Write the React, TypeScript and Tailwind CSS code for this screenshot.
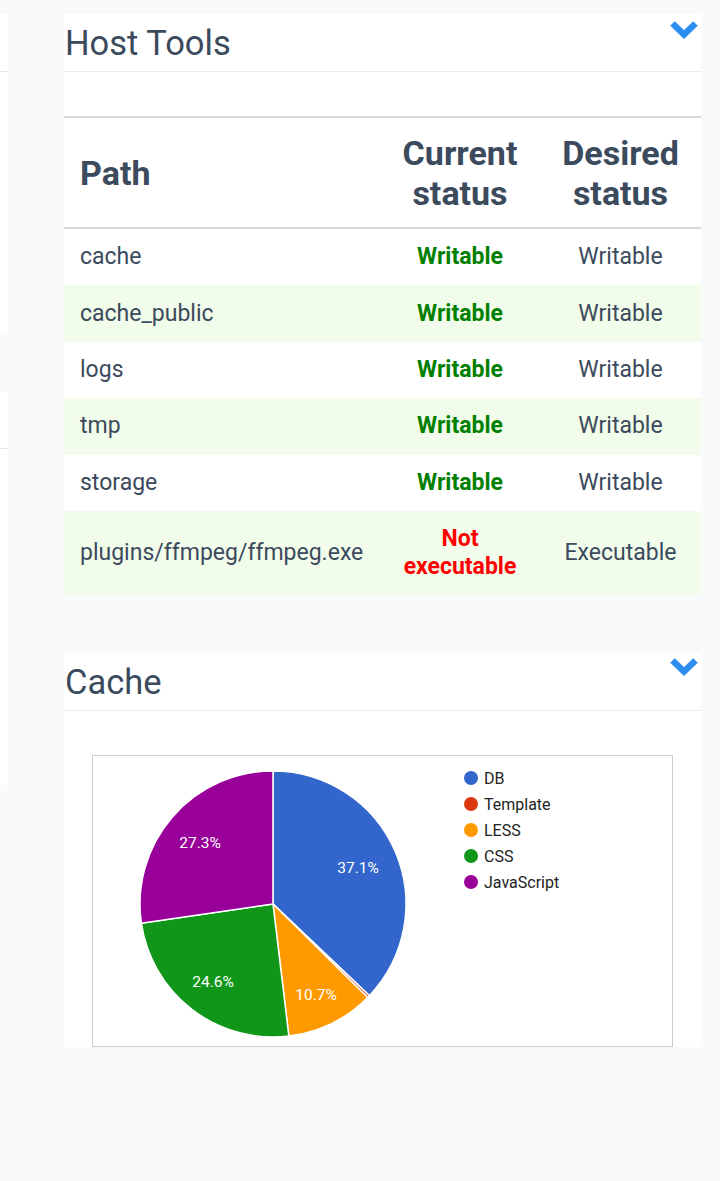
import React from "react";

type Row = { path: string; current: string; ok: boolean; desired: string };

const rows: Row[] = [
  { path: "cache", current: "Writable", ok: true, desired: "Writable" },
  { path: "cache_public", current: "Writable", ok: true, desired: "Writable" },
  { path: "logs", current: "Writable", ok: true, desired: "Writable" },
  { path: "tmp", current: "Writable", ok: true, desired: "Writable" },
  { path: "storage", current: "Writable", ok: true, desired: "Writable" },
  { path: "plugins/ffmpeg/ffmpeg.exe", current: "Not executable", ok: false, desired: "Executable" },
];

const slices = [
  { name: "DB", value: 37.1, color: "#3366cc" },
  { name: "Template", value: 0.3, color: "#dc3912" },
  { name: "LESS", value: 10.7, color: "#ff9900" },
  { name: "CSS", value: 24.6, color: "#109618" },
  { name: "JavaScript", value: 27.3, color: "#990099" },
];

const labels = [
  { text: "37.1%", dx: 85, dy: -37 },
  { text: "10.7%", dx: 43, dy: 90 },
  { text: "24.6%", dx: -60, dy: 77 },
  { text: "27.3%", dx: -73, dy: -62 },
];

function Chevron() {
  return (
    <svg width="30" height="20" viewBox="0 0 30 20">
      <polyline points="3.5,3.5 15,14.5 26.5,3.5" fill="none" stroke="#2b8ef0" strokeWidth="6.5" strokeLinecap="butt" strokeLinejoin="miter" />
    </svg>
  );
}

function PieChart() {
  const cx = 180;
  const cy = 148;
  const r = 133;
  const total = slices.reduce((s, x) => s + x.value, 0);
  let start = -Math.PI / 2;
  const paths = slices.map((s) => {
    const sweep = (s.value / total) * Math.PI * 2;
    const end = start + sweep;
    const x1 = cx + r * Math.cos(start);
    const y1 = cy + r * Math.sin(start);
    const x2 = cx + r * Math.cos(end);
    const y2 = cy + r * Math.sin(end);
    const large = sweep > Math.PI ? 1 : 0;
    const d = `M${cx},${cy} L${x1},${y1} A${r},${r} 0 ${large} 1 ${x2},${y2} Z`;
    start = end;
    return { d, color: s.color };
  });

  return (
    <svg width="579" height="290" viewBox="0 0 579 290" style={{ fontFamily: "Roboto, Arial, sans-serif" }}>
      {paths.map((p, i) => (
        <path key={i} d={p.d} fill={p.color} stroke="#ffffff" strokeWidth="1.5" />
      ))}
      {labels.map((l) => (
        <text key={l.text} x={cx + l.dx} y={cy + l.dy + 5.5} fill="#ffffff" fontSize="15.5" textAnchor="middle">
          {l.text}
        </text>
      ))}
      {slices.map((s, i) => (
        <g key={s.name}>
          <circle cx="378" cy={22 + i * 26} r="7" fill={s.color} />
          <text x="391" y={22 + i * 26 + 5.5} fontSize="16" fill="#222222">
            {s.name}
          </text>
        </g>
      ))}
    </svg>
  );
}

export default function App() {
  return (
    <div className="min-h-[1181px] w-[720px] bg-[#f9fafc] font-['Roboto',Arial,sans-serif] text-[#3b4a5c] flex gap-[56px] pt-[14px]">
      {/* left column, mostly off-screen */}
      <div className="w-[8px] shrink-0 flex flex-col gap-[59px]">
        <div className="bg-white h-[319px]">
          <div className="h-[58px] border-b border-[#e6e6e6]" />
        </div>
        <div className="bg-white h-[393px]">
          <div className="h-[57px] border-b border-[#e6e6e6]" />
        </div>
      </div>

      {/* main column */}
      <div className="w-[637px] shrink-0 flex flex-col gap-[58px]">
        {/* Host Tools */}
        <div className="bg-white">
          <div className="h-[58px] flex items-start justify-between border-b border-[#e9ecef] pl-[1px]">
            <h2 className="text-[34.5px] leading-[58px] font-normal">Host Tools</h2>
            <div className="pt-[6px] pr-[2px]">
              <Chevron />
            </div>
          </div>
          <div className="h-[44px]" />
          <div className="border-t-2 border-[#d9d9d9]">
            <div className="grid grid-cols-[316px_160px_161px] items-center h-[111px] border-b-2 border-[#d9d9d9] text-[34px] font-bold leading-[40px]">
              <div className="pl-[16px]">Path</div>
              <div className="text-center">Current status</div>
              <div className="text-center">Desired status</div>
            </div>
            {rows.map((row, i) => (
              <div
                key={row.path}
                className={`grid grid-cols-[316px_160px_161px] items-center py-[14.2px] text-[23px] leading-[28px] ${
                  i % 2 === 1 ? "bg-[#f2fcea]" : "bg-white"
                }`}
              >
                <div className="pl-[16px]">{row.path}</div>
                <div className={`text-center font-bold ${row.ok ? "text-[#008000]" : "text-[#ff0000] px-[20px]"}`}>
                  {row.current}
                </div>
                <div className="text-center">{row.desired}</div>
              </div>
            ))}
          </div>
        </div>

        {/* Cache */}
        <div className="bg-white">
          <div className="h-[58px] flex items-start justify-between border-b border-[#e9ecef] pl-[1px]">
            <h2 className="text-[34.5px] leading-[58px] font-normal">Cache</h2>
            <div className="pt-[4px] pr-[2px]">
              <Chevron />
            </div>
          </div>
          <div className="pt-[44px] pl-[28px]">
            <div className="w-[581px] border border-[#cccccc]">
              <PieChart />
            </div>
          </div>
        </div>
      </div>
    </div>
  );
}
